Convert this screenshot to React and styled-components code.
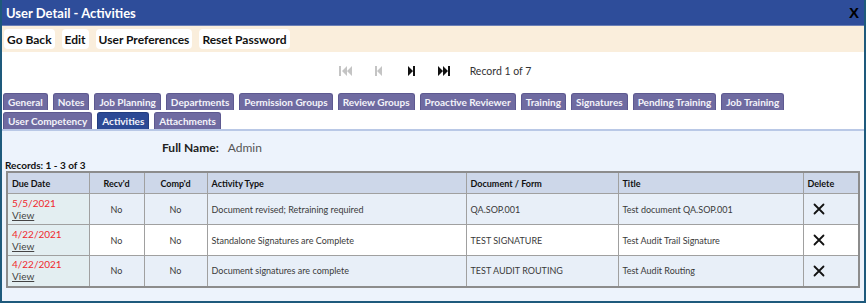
import React from 'react'
import styled, { createGlobalStyle } from 'styled-components'

const GlobalStyle = createGlobalStyle`
  body {
    margin: 0;
    font-family: Lato, "Open Sans", sans-serif;
    background: #fff;
  }
`;

const tabsTop = [
  'General', 'Notes', 'Job Planning', 'Departments', 'Permission Groups', 'Review Groups',
  'Proactive Reviewer', 'Training', 'Signatures', 'Pending Training', 'Job Training',
];
const tabsBottom = ['User Competency', 'Activities', 'Attachments'];

const rows = [
  { date: '5/5/2021', type: 'Document revised; Retraining required', doc: 'QA.SOP.001', title: 'Test document QA.SOP.001', alt: true },
  { date: '4/22/2021', type: 'Standalone Signatures are Complete', doc: 'TEST SIGNATURE', title: 'Test Audit Trail Signature', alt: false },
  { date: '4/22/2021', type: 'Document signatures are complete', doc: 'TEST AUDIT ROUTING', title: 'Test Audit Routing', alt: true },
];

function PagerIcon({ kind, disabled }) {
  const color = disabled ? '#c4c4c4' : '#111';
  const paths = {
    first: 'M1 1h2v10H1zM9 1v10L4 6zM14 1v10L9 6z',
    prev: 'M1 1h2v10H1zM8 1v10L3 6z',
    next: 'M1 1v10l5-5zM6 1h2v10H6z',
    last: 'M1 1v10l5-5zM6 1v10l5-5zM11 1h2v10h-2z',
  };
  const w = kind === 'first' || kind === 'last' ? 14 : 9;
  return (
    <svg width={w} height="12" viewBox={`0 0 ${w} 12`}>
      <path d={paths[kind]} fill={color} />
    </svg>
  );
}

function DeleteIcon() {
  return (
    <svg width="12" height="12" viewBox="0 0 12 12">
      <path d="M1.5 1.5L10.5 10.5M10.5 1.5L1.5 10.5" stroke="#111" strokeWidth="1.8" strokeLinecap="round" />
    </svg>
  );
}

function App() {
  return (
    <Frame>
      <GlobalStyle />
      <TitleBar>
        <Title>User Detail - Activities</Title>
        <Close>X</Close>
      </TitleBar>
      <Toolbar>
        <ToolButton>Go Back</ToolButton>
        <ToolButton>Edit</ToolButton>
        <ToolButton>User Preferences</ToolButton>
        <ToolButton>Reset Password</ToolButton>
      </Toolbar>
      <Pager>
        <PagerBtn><PagerIcon kind="first" disabled /></PagerBtn>
        <PagerBtn><PagerIcon kind="prev" disabled /></PagerBtn>
        <PagerBtn><PagerIcon kind="next" /></PagerBtn>
        <PagerBtn><PagerIcon kind="last" /></PagerBtn>
        <RecordText>Record 1 of 7</RecordText>
      </Pager>
      <Tabs>
        <TabRow>
          {tabsTop.map((t) => <Tab key={t}>{t}</Tab>)}
        </TabRow>
        <TabRow>
          {tabsBottom.map((t) => <Tab key={t} $active={t === 'Activities'}>{t}</Tab>)}
        </TabRow>
      </Tabs>
      <Content>
        <NameLine>
          <NameLabel>Full Name:</NameLabel>
          <NameValue>Admin</NameValue>
        </NameLine>
        <RecordsLabel>Records: 1 - 3 of 3</RecordsLabel>
        <Table>
          <colgroup>
            <col style={{ width: 82 }} />
            <col style={{ width: 55 }} />
            <col style={{ width: 63 }} />
            <col style={{ width: 259 }} />
            <col style={{ width: 152 }} />
            <col style={{ width: 185 }} />
            <col style={{ width: 56 }} />
          </colgroup>
          <thead>
            <tr>
              <Th>Due Date</Th>
              <Th $center>Recv'd</Th>
              <Th $center>Comp'd</Th>
              <Th>Activity Type</Th>
              <Th>Document / Form</Th>
              <Th>Title</Th>
              <Th>Delete</Th>
            </tr>
          </thead>
          <tbody>
            {rows.map((r, i) => (
              <Row key={i} $alt={r.alt}>
                <DateCell>
                  <DueDate>{r.date}</DueDate>
                  <ViewLink href="#">View</ViewLink>
                </DateCell>
                <Td $center>No</Td>
                <Td $center>No</Td>
                <Td>{r.type}</Td>
                <Td>{r.doc}</Td>
                <Td>{r.title}</Td>
                <Td $pad><DeleteIcon /></Td>
              </Row>
            ))}
          </tbody>
        </Table>
      </Content>
    </Frame>
  )
}

export default App

const Frame = styled.div`
  width: 866px;
  height: 303px;
  box-sizing: border-box;
  border: 2px solid #1e5a7c;
  border-top: none;
  display: flex;
  flex-direction: column;
  overflow: hidden;
  background: #edf3fc;
`;

const TitleBar = styled.div`
  height: 25px;
  margin: 0 -2px;
  padding: 0 7px 0 6px;
  background: #2e4d9a;
  border-bottom: 1px solid #6b7fb5;
  display: flex;
  align-items: center;
  justify-content: space-between;
  flex-shrink: 0;
`;

const Title = styled.div`
  color: #fff;
  font-family: Lato, sans-serif;
  font-weight: 700;
  font-size: 13px;
`;

const Close = styled.div`
  color: #000;
  font-family: "Liberation Sans", sans-serif;
  font-weight: 700;
  font-size: 15px;
`;

const Toolbar = styled.div`
  height: 26px;
  background: #faeedc;
  display: flex;
  align-items: center;
  gap: 7px;
  padding: 0 2px;
  flex-shrink: 0;
`;

const ToolButton = styled.button`
  height: 20px;
  background: #fff;
  border: none;
  border-radius: 4px;
  padding: 0 3px;
  font-family: Lato, sans-serif;
  font-weight: 700;
  font-size: 12px;
  color: #111;
`;

const Pager = styled.div`
  height: 37px;
  background: #fff;
  display: flex;
  align-items: center;
  justify-content: center;
  padding-right: 6px;
  flex-shrink: 0;
`;

const PagerBtn = styled.span`
  width: 33px;
  display: flex;
  justify-content: center;
`;

const RecordText = styled.span`
  margin-left: 9px;
  font-family: Lato, sans-serif;
  font-size: 10.5px;
  color: #333;
`;

const Tabs = styled.div`
  background: #fff;
  padding: 4px 1px 0;
  display: flex;
  flex-direction: column;
  gap: 2px;
  border-bottom: 2px solid #b9c8e6;
  flex-shrink: 0;
`;

const TabRow = styled.div`
  display: flex;
  gap: 5px;
`;

const Tab = styled.div`
  height: 17px;
  box-sizing: border-box;
  padding: 0 4px;
  display: flex;
  align-items: center;
  border-radius: 3px 3px 0 0;
  border: 1px solid ${(p) => (p.$active ? '#223d80' : '#5d5990')};
  border-bottom: none;
  background: ${(p) => (p.$active ? '#2c4a95' : '#6f6ba1')};
  color: #f4f4fa;
  font-family: Lato, sans-serif;
  font-weight: 700;
  font-size: 10px;
  white-space: nowrap;
`;

const Content = styled.div`
  flex: 1;
  padding: 0 3px;
  background: #edf3fc;
`;

const NameLine = styled.div`
  display: flex;
  gap: 9px;
  padding: 10px 0 0 157px;
  height: 23px;
  box-sizing: border-box;
  align-items: center;
  font-family: Lato, sans-serif;
  font-size: 12px;
`;

const NameLabel = styled.span`
  font-weight: 700;
  color: #222;
`;

const NameValue = styled.span`
  color: #555;
`;

const RecordsLabel = styled.div`
  margin-top: 5px;
  font-family: Lato, sans-serif;
  font-weight: 700;
  font-size: 10px;
  line-height: 12px;
  color: #111;
`;

const Table = styled.table`
  width: 854px;
  margin-left: 1px;
  margin-top: 0;
  border-collapse: collapse;
  table-layout: fixed;
  border: 2px solid #8c8c8c;
  font-family: Lato, sans-serif;
  font-size: 9px;
`;

const Th = styled.th`
  height: 20px;
  padding: 0 4px;
  background: #cdd7e9;
  border: 1px solid #a0a0a0;
  text-align: ${(p) => (p.$center ? 'center' : 'left')};
  font-weight: 700;
  color: #111;
`;

const Row = styled.tr`
  background: ${(p) => (p.$alt ? '#e8eff8' : '#fff')};
`;

const Td = styled.td`
  height: 31px;
  box-sizing: border-box;
  padding: ${(p) => (p.$pad ? '2px 0 0 9px' : '0 4px')};
  border: 1px solid #a0a0a0;
  text-align: ${(p) => (p.$center ? 'center' : 'left')};
  color: #3a3a3a;
  vertical-align: middle;
`;

const DateCell = styled.td`
  height: 31px;
  box-sizing: border-box;
  padding: 0 4px;
  border: 1px solid #a0a0a0;
  background: #e3eef1;
  vertical-align: middle;
  line-height: 12px;
`;

const DueDate = styled.div`
  color: #f0282d;
  font-size: 10px;
`;

const ViewLink = styled.a`
  color: #444;
  font-size: 10px;
  text-decoration: underline;
`;
